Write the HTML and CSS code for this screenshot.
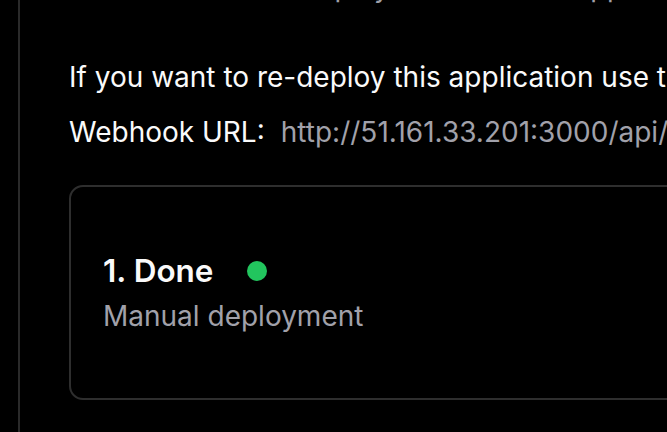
FILE: index.html
```html
<!DOCTYPE html>
<html lang="en">
<head>
<meta charset="utf-8">
<title>Deployments</title>
<link rel="stylesheet" href="styles.css">
</head>
<body>
<div class="page">
  <main class="content">
    <p class="muted-line">See all the 10 last deployments for this application</p>
    <p class="text">If you want to re-deploy this application use this URL in the config of your git provider or docker</p>
    <p class="text webhook"><span class="label">Webhook URL:</span><span class="url">http://51.161.33.201:3000/api/deploy/9b3c1d2e4f</span></p>
    <div class="card">
      <div class="card-info">
        <div class="card-title"><span>1. Done</span><span class="dot"></span></div>
        <div class="card-sub">Manual deployment</div>
      </div>
    </div>
  </main>
</div>
</body>
</html>
```
FILE: styles.css
```css
html, body {
  margin: 0;
  padding: 0;
  background: #000;
  overflow: hidden;
}
body {
  font-family: Inter, "Noto Sans", sans-serif;
  color: #fafafa;
  width: 667px;
  height: 432px;
}
.page {
  height: 432px;
  padding-left: 18px;
  display: flex;
}
.content {
  border-left: 2px solid #2a2a2a;
  padding-left: 49px;
  width: 1200px;
  flex: none;
  display: flex;
  flex-direction: column;
}
.muted-line {
  margin: -31px 0 0;
  font-size: 27.5px;
  line-height: 36px;
  color: #a1a1aa;
  white-space: nowrap;
}
.text {
  margin: 0;
  font-size: 28px;
  line-height: 36px;
  white-space: nowrap;
}
.muted-line + .text {
  margin-top: 54px;
}
.webhook {
  margin-top: 19px;
  display: flex;
  gap: 16px;
}
.url {
  color: #a1a1aa;
}
.card {
  margin-top: 35px;
  height: 211px;
  border: 2px solid #2e2e2e;
  border-radius: 14px;
  padding-left: 32px;
  display: flex;
  align-items: center;
}
.card-info {
  display: flex;
  flex-direction: column;
  gap: 8px;
}
.card-title {
  display: flex;
  align-items: center;
  gap: 34px;
  font-size: 31.5px;
  font-weight: 600;
  line-height: 38px;
}
.dot {
  width: 20px;
  height: 20px;
  border-radius: 50%;
  background: #22c55e;
}
.card-sub {
  font-size: 28px;
  line-height: 36px;
  color: #a1a1aa;
}
```
